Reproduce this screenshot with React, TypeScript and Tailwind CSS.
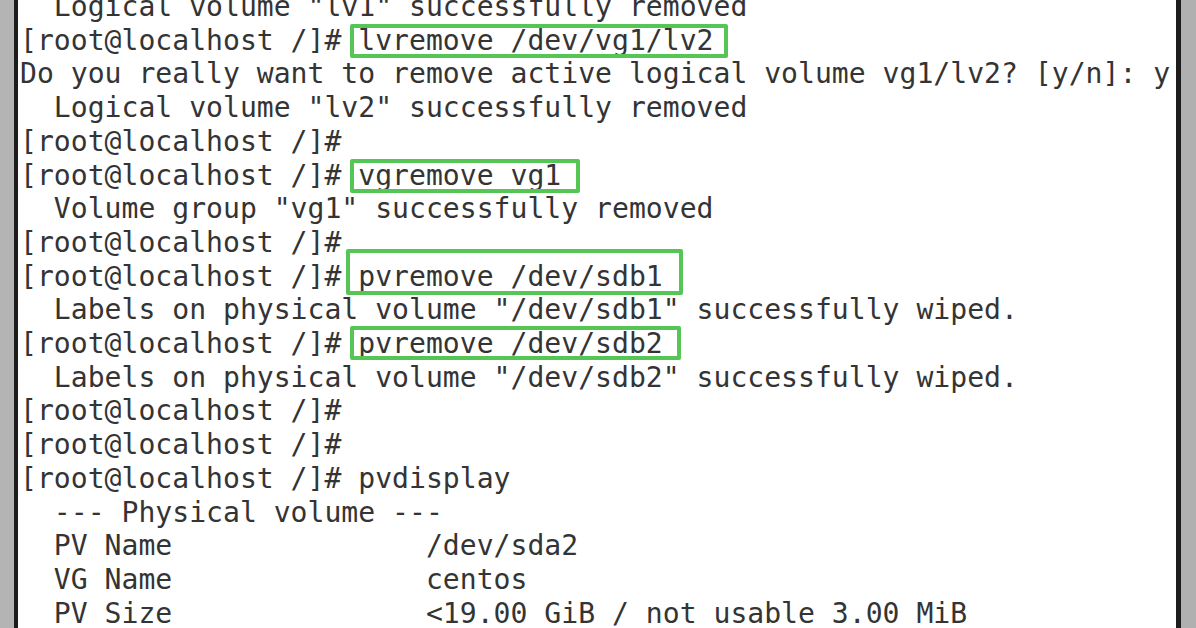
const P = "[root@localhost /]# ";

function Boxed({ text, cls }: { text: string; cls: string }) {
  return (
    <span className="relative">
      {text}
      <span className={`absolute border-4 border-[#55c655] rounded-[2px] pointer-events-none ${cls}`} />
    </span>
  );
}

export default function App() {
  return (
    <div className="w-[1196px] h-[628px] flex overflow-hidden bg-white">
      <div className="w-[14px] shrink-0 bg-[#b4b4b4]" />
      <div className="w-[4px] shrink-0 bg-[#1c1c1c]" />
      <main className="flex-1 bg-white pl-[2px] overflow-hidden">
        <pre
          className="-mt-[10px] text-[28.1px] leading-[33.7px] text-[#343434] whitespace-pre"
          style={{ fontFamily: '"DejaVu Sans Mono", monospace' }}
        >
          <div>  Logical volume "lv1" successfully removed</div>
          <div>
            {P}
            <Boxed text="lvremove /dev/vg1/lv2" cls="-left-[8px] -right-[15px] top-[0px] -bottom-[1px]" />
          </div>
          <div>Do you really want to remove active logical volume vg1/lv2? [y/n]: y</div>
          <div>  Logical volume "lv2" successfully removed</div>
          <div>[root@localhost /]#</div>
          <div>
            {P}
            <Boxed text="vgremove vg1" cls="-left-[8px] -right-[19px] top-[0px] -bottom-[1px]" />
          </div>
          <div>  Volume group "vg1" successfully removed</div>
          <div>[root@localhost /]#</div>
          <div>
            {P}
            <Boxed text="pvremove /dev/sdb1" cls="-left-[12px] -right-[20px] -top-[11px] -bottom-[2px]" />
          </div>
          <div>  Labels on physical volume "/dev/sdb1" successfully wiped.</div>
          <div>
            {P}
            <Boxed text="pvremove /dev/sdb2" cls="-left-[8px] -right-[18px] -top-[1px] bottom-[0px]" />
          </div>
          <div>  Labels on physical volume "/dev/sdb2" successfully wiped.</div>
          <div>[root@localhost /]#</div>
          <div>[root@localhost /]#</div>
          <div>[root@localhost /]# pvdisplay</div>
          <div>  --- Physical volume ---</div>
          <div>  PV Name               /dev/sda2</div>
          <div>  VG Name               centos</div>
          <div>  PV Size               &lt;19.00 GiB / not usable 3.00 MiB</div>
        </pre>
      </main>
      <div className="w-[5px] shrink-0 bg-[#1c1c1c]" />
      <div className="w-[15px] shrink-0 bg-[#b0b0b0]" />
    </div>
  );
}
